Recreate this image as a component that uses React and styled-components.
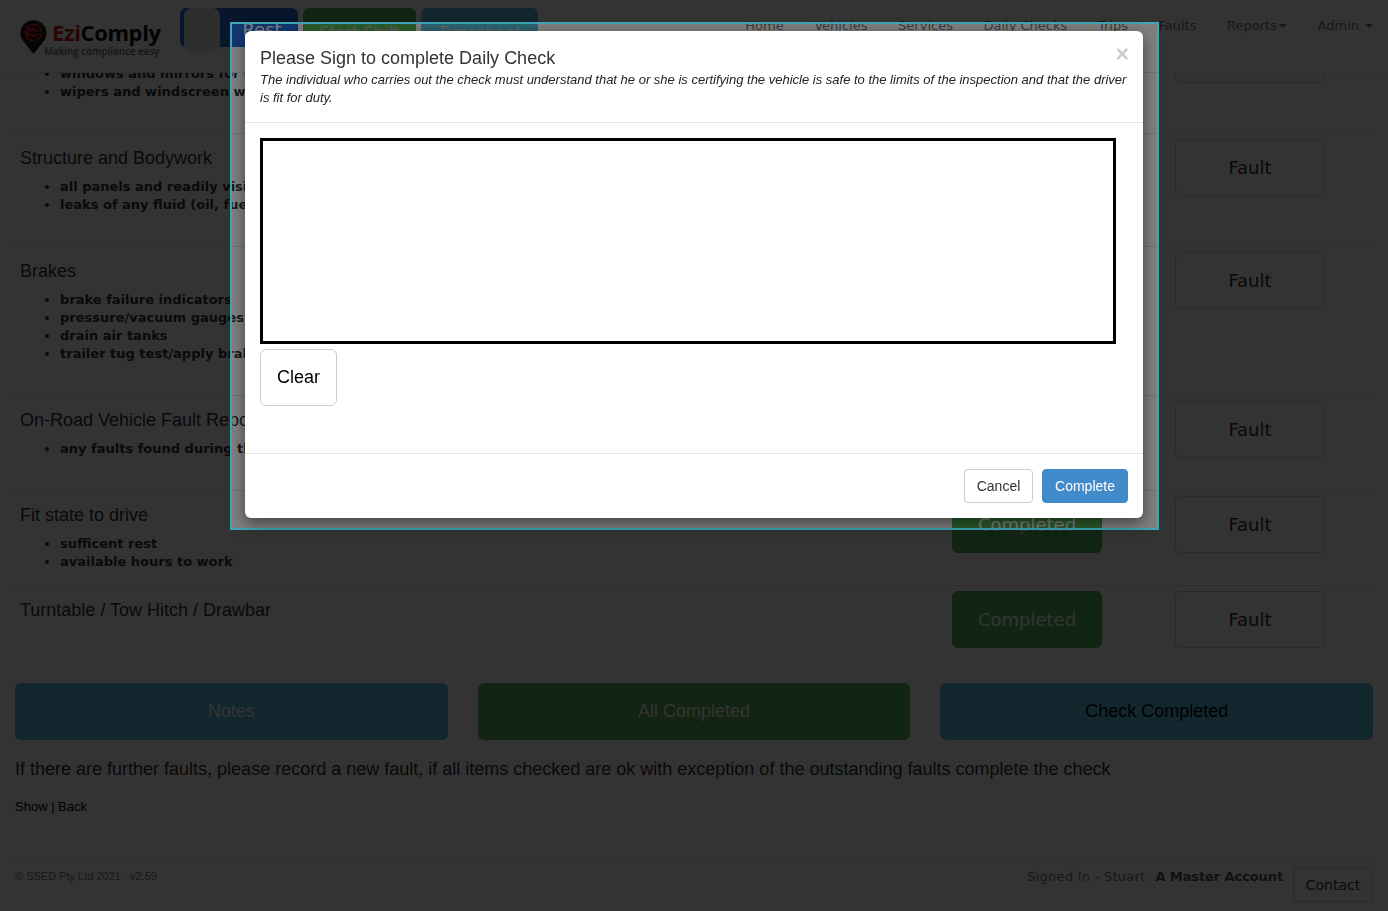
import React from 'react';
import styled, { createGlobalStyle } from 'styled-components';

const Global = createGlobalStyle`
  html, body { margin: 0; padding: 0; height: 911px; overflow: hidden; background: #fff; }
  body { font-family: "Liberation Sans", Arial, sans-serif; color: #333; }
  * { box-sizing: border-box; }
`;

const Page = styled.div`
  width: 1388px;
  height: 911px;
  padding: 21px 15px 0;
  overflow: hidden;
`;

const Navbar = styled.header`
  position: fixed;
  top: 0;
  left: 0;
  width: 1388px;
  height: 73px;
  display: flex;
  align-items: flex-start;
  padding-left: 20px;
  background: #fff;
  border-bottom: 1px solid #e7e7e7;
  z-index: 2;
`;

const Logo = styled.div`
  width: 160px;
  height: 40px;
  margin-top: 19px;
  display: flex;
  align-items: flex-start;
  gap: 5px;
  flex: none;
`;

const LogoText = styled.div`
  display: flex;
  flex-direction: column;
  font-family: "Open Sans", sans-serif;
`;

const LogoName = styled.div`
  font-size: 22px;
  line-height: 24px;
  font-weight: 700;
  margin-top: 1px;
  letter-spacing: -0.4px;
  color: #111;
  span { color: #c8242c; }
`;

const LogoTag = styled.div`
  font-size: 9.8px;
  line-height: 11px;
  font-weight: 600;
  margin: 2px 0 0 -8px;
  white-space: nowrap;
  color: #666;
`;

const QuickButtons = styled.div`
  display: flex;
  gap: 5px;
  margin-top: 8px;
  flex: none;
`;

const QuickButton = styled.div`
  position: relative;
  width: ${p => p.$w}px;
  height: 39px;
  padding-left: ${p => p.$pad}px;
  display: flex;
  align-items: flex-start;
  justify-content: center;
  font-family: "DejaVu Sans", sans-serif;
  font-size: ${p => p.$size}px;
  line-height: ${p => p.$line}px;
  color: ${p => p.$fg};
  background: ${p => p.$bg};
  border-radius: 6px;
`;

const QuickIcon = styled.span`
  position: absolute;
  left: 4px;
  top: 0;
  width: 36px;
  height: 44px;
  border-radius: 8px;
  background: #e6e6e6;
`;

const NavLinks = styled.nav`
  display: flex;
  margin-left: auto;
  margin-right: 15px;
  margin-top: 17px;
  gap: 30.6px;
  font-family: "DejaVu Sans", sans-serif;
  font-size: 13px;
  line-height: 18px;
  color: #777;
`;

const NavLink = styled.span`
  display: inline-flex;
  align-items: center;
`;

const Caret = styled.i`
  display: inline-block;
  margin-left: ${p => p.$gap}px;
  width: 0;
  height: 0;
  border-top: 4px solid #777;
  border-left: 4px solid transparent;
  border-right: 4px solid transparent;
`;

const Row = styled.section`
  display: flex;
  align-items: flex-start;
  min-height: 94px;
  padding: 0 48px 0 5px;
  border-bottom: ${p => (p.$last ? 'none' : '1px solid #e7e7e7')};
`;

const RowText = styled.div`
  flex: 1;
  min-width: 0;
  padding-top: 14px;
`;

const RowTitle = styled.div`
  font-size: 18px;
  line-height: 20px;
`;

const Items = styled.ul`
  margin: 10px 0 ${p => p.$tail}px;
  padding-left: 40px;
  font-family: "DejaVu Sans", sans-serif;
  font-size: 13px;
  line-height: 18px;
  font-weight: 700;
  white-space: nowrap;
`;

const RowButton = styled.div`
  width: 150px;
  height: 57px;
  margin: 5px 0 0 73px;
  flex: none;
  display: flex;
  align-items: center;
  justify-content: center;
  border-radius: 6px;
  font-family: "DejaVu Sans", sans-serif;
  font-size: 18px;
  border: 1px solid ${p => (p.$done ? '#4cae4c' : '#ccc')};
  background: ${p => (p.$done ? '#5cb85c' : '#fff')};
  color: ${p => (p.$done ? '#fff' : '#333')};
`;

const Actions = styled.div`
  display: flex;
  gap: 30px;
  margin-top: 3px;
`;

const ActionButton = styled.div`
  flex: 1;
  height: 57px;
  display: flex;
  align-items: center;
  justify-content: center;
  border-radius: 6px;
  font-size: 18px;
  background: ${p => p.$bg};
  color: ${p => p.$fg};
`;

const Note = styled.p`
  margin: 19px 0 18px;
  font-size: 18px;
  line-height: 20px;
`;

const SmallLinks = styled.div`
  font-size: 13px;
  line-height: 20px;
  color: #000;
`;

const Footer = styled.footer`
  display: flex;
  align-items: flex-start;
  margin-top: 42px;
  padding-top: 7px;
  border-top: 1px solid #eee;
`;

const Copy = styled.div`
  font-size: 11px;
  line-height: 18px;
  color: #777;
  span { margin-left: 9px; }
`;

const Signed = styled.div`
  margin-left: auto;
  font-family: "DejaVu Sans", sans-serif;
  font-size: 13px;
  line-height: 18px;
  padding-top: 1px;
  letter-spacing: 0.25px;
  color: #777;
  b { margin-left: 10px; letter-spacing: -0.1px; color: #555; }
`;

const Contact = styled.div`
  margin-left: 10px;
  width: 80px;
  height: 35px;
  display: flex;
  align-items: center;
  justify-content: center;
  border: 1px solid #ccc;
  border-radius: 4px;
  font-family: "DejaVu Sans", sans-serif;
  font-size: 14px;
  color: #333;
`;

const Backdrop = styled.div`
  position: fixed;
  inset: 0;
  background: rgba(0, 0, 0, 0.8);
  z-index: 5;
`;

const Frame = styled.div`
  position: fixed;
  left: 230px;
  top: 22px;
  width: 929px;
  padding: 7px 14px 10px 13px;
  border: 2px solid #3fa7b8;
  backdrop-filter: brightness(2.5);
  z-index: 6;
`;

const Modal = styled.div`
  background: #fff;
  border-radius: 6px;
  box-shadow: 0 5px 15px rgba(0, 0, 0, 0.5);
`;

const ModalHeader = styled.div`
  position: relative;
  height: 92px;
  padding: 15px;
  border-bottom: 1px solid #e5e5e5;
`;

const ModalTitle = styled.div`
  font-size: 18px;
  line-height: 25px;
  color: #333;
`;

const ModalHint = styled.div`
  font-size: 13px;
  line-height: 18px;
  font-style: italic;
  color: #222;
`;

const Close = styled.span`
  position: absolute;
  right: 14px;
  top: 10px;
  font-size: 23px;
  line-height: 26px;
  font-weight: 700;
  color: #000;
  opacity: 0.2;
`;

const ModalBody = styled.div`
  height: 331px;
  padding: 15px;
  border-bottom: 1px solid #e5e5e5;
`;

const SignaturePad = styled.div`
  width: 856px;
  height: 206px;
  border: 3px solid #000;
  background: #fff;
`;

const ClearButton = styled.div`
  width: 77px;
  height: 57px;
  margin-top: 5px;
  display: flex;
  align-items: center;
  justify-content: center;
  border: 1px solid #ccc;
  border-radius: 6px;
  font-size: 18px;
  color: #000;
`;

const ModalFooter = styled.div`
  display: flex;
  justify-content: flex-end;
  gap: 9px;
  padding: 15px;
`;

const ModalButton = styled.div`
  height: 34px;
  width: ${p => p.$w}px;
  display: flex;
  align-items: center;
  justify-content: center;
  border-radius: 4px;
  font-size: 14px;
  border: 1px solid ${p => (p.$primary ? '#3f87c6' : '#ccc')};
  background: ${p => (p.$primary ? '#428bca' : '#fff')};
  color: ${p => (p.$primary ? '#fff' : '#333')};
`;

const rows = [
  { title: '\u00a0', items: ['windows and mirrors for damage', 'wipers and windscreen washers'], tail: 32 },
  { title: 'Structure and Bodywork', items: ['all panels and readily visible items', 'leaks of any fluid (oil, fuel, water)'], tail: 32 },
  { title: 'Brakes', items: ['brake failure indicators', 'pressure/vacuum gauges', 'drain air tanks', 'trailer tug test/apply brakes'], tail: 32 },
  { title: 'On-Road Vehicle Fault Reporting', items: ['any faults found during the trip'], tail: 32 },
  { title: 'Fit state to drive', items: ['sufficent rest', 'available hours to work'], tail: 14 },
  { title: 'Turntable / Tow Hitch / Drawbar', items: [], tail: 0, last: true },
];

const links = ['Home', 'Vehicles', 'Services', 'Daily Checks', 'Trips', 'Faults'];

function PinLogo() {
  return (
    <svg width="27" height="36" viewBox="0 0 27 36" style={{ flex: 'none' }}>
      <path d="M13.5 35 L4 23 A13 13 0 1 1 23 23 Z" fill="#1a1a1a" />
      <circle cx="13.5" cy="13.5" r="9" fill="#c8242c" />
      <path d="M9 9.5 A6 6 0 0 1 19 11 M9 17.5 A6 6 0 0 0 19 16 M9 13.5 H24" fill="none" stroke="#111" strokeWidth="2.2" />
    </svg>
  );
}

export default function App() {
  return (
    <>
      <Global />
      <Navbar>
        <Logo>
          <PinLogo />
          <LogoText>
            <LogoName><span>Ezi</span>Comply</LogoName>
            <LogoTag>Making compliance easy</LogoTag>
          </LogoText>
        </Logo>
        <QuickButtons>
          <QuickButton $w={118} $pad={46} $size={18} $line={44} $fg="#fff" $bg="#2a6fe0">
            <QuickIcon />
            Rest
          </QuickButton>
          <QuickButton $w={113} $pad={0} $size={16} $line={50} $fg="#b8b8b8" $bg="#5cb85c">Start Shift</QuickButton>
          <QuickButton $w={117} $pad={0} $size={16} $line={50} $fg="#c8c8c8" $bg="#5bc0de">Timesheet</QuickButton>
        </QuickButtons>
        <NavLinks>
          {links.map(l => <NavLink key={l}>{l}</NavLink>)}
          <NavLink>Reports<Caret $gap={2} /></NavLink>
          <NavLink>Admin<Caret $gap={6} /></NavLink>
        </NavLinks>
      </Navbar>
      <Page>
        {rows.map(r => (
          <Row key={r.title} $last={r.last}>
            <RowText>
              <RowTitle>{r.title}</RowTitle>
              {r.items.length > 0 && (
                <Items $tail={r.tail}>
                  {r.items.map(i => <li key={i}>{i}</li>)}
                </Items>
              )}
            </RowText>
            <RowButton $done>Completed</RowButton>
            <RowButton>Fault</RowButton>
          </Row>
        ))}
        <Actions>
          <ActionButton $bg="#5bc0de" $fg="#fff">Notes</ActionButton>
          <ActionButton $bg="#5cb85c" $fg="#fff">All Completed</ActionButton>
          <ActionButton $bg="#5bc0de" $fg="#000">Check Completed</ActionButton>
        </Actions>
        <Note>If there are further faults, please record a new fault, if all items checked are ok with exception of the outstanding faults complete the check</Note>
        <SmallLinks>Show | Back</SmallLinks>
        <Footer>
          <Copy>© SSED Pty Ltd 2021<span>v2.59</span></Copy>
          <Signed>Signed In - Stuart<b>A Master Account</b></Signed>
          <Contact>Contact</Contact>
        </Footer>
      </Page>
      <Backdrop />
      <Frame>
        <Modal>
          <ModalHeader>
            <Close>×</Close>
            <ModalTitle>Please Sign to complete Daily Check</ModalTitle>
            <ModalHint>The individual who carries out the check must understand that he or she is certifying the vehicle is safe to the limits of the inspection and that the driver is fit for duty.</ModalHint>
          </ModalHeader>
          <ModalBody>
            <SignaturePad />
            <ClearButton>Clear</ClearButton>
          </ModalBody>
          <ModalFooter>
            <ModalButton $w={69}>Cancel</ModalButton>
            <ModalButton $w={86} $primary>Complete</ModalButton>
          </ModalFooter>
        </Modal>
      </Frame>
    </>
  );
}
